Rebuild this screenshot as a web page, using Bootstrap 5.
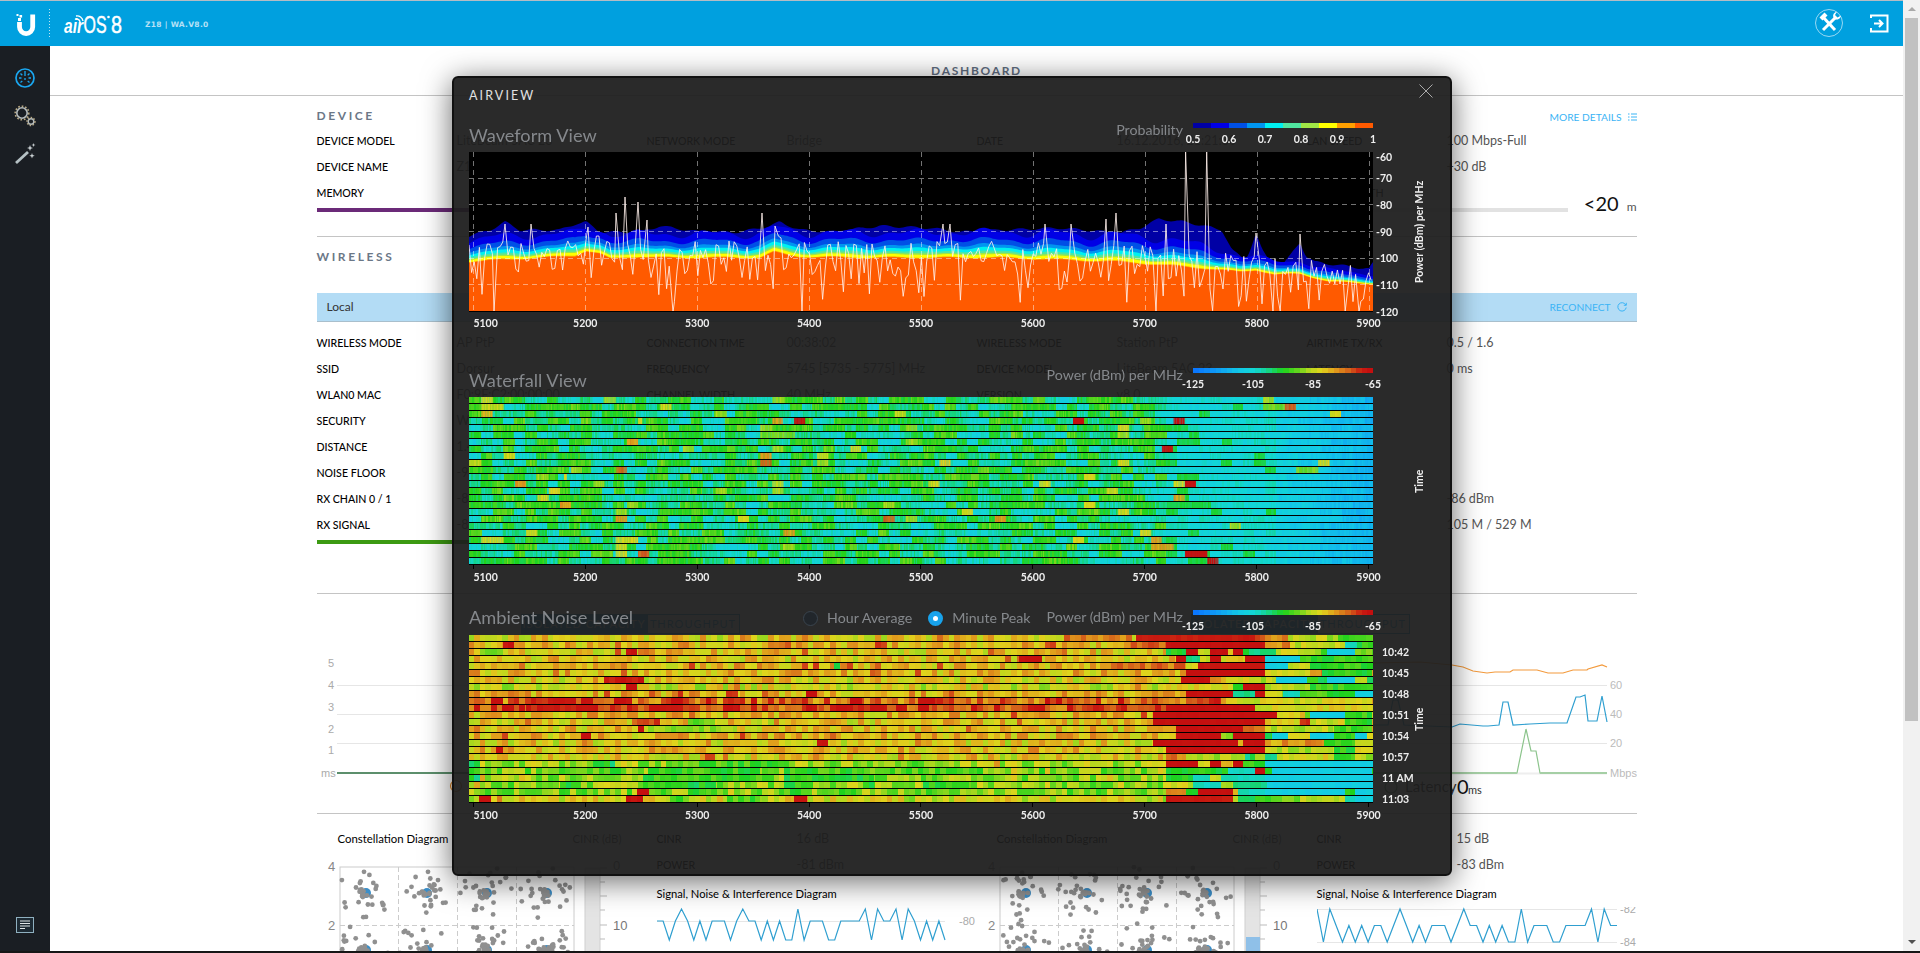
<!DOCTYPE html>
<html lang="en">
<head>
<meta charset="utf-8">
<title>airOS 8</title>
<link href="https://cdn.jsdelivr.net/npm/bootstrap@5.3.0/dist/css/bootstrap.min.css" rel="stylesheet">
<style>
html,body{height:953px;overflow:hidden;margin:0;background:#fff;font-family:"Lato",sans-serif;color:#555;font-size:12.5px}
.shell{height:953px;display:flex;flex-direction:column;position:relative;border-top:1px solid #b4bcc4}
.bluebar{height:45px;flex:none;background:#00a0df;padding:0!important;display:flex;align-items:stretch;margin-right:17px;flex-wrap:nowrap;justify-content:flex-start}
.ver{font:700 7.5px/1 "DejaVu Sans",sans-serif;letter-spacing:.3px;color:#b6e0f6;margin:20px 0 0 0;height:10px}
.topicons{margin-right:14px}
.midrow{flex:1;display:flex;min-height:0}
.footstrip{height:2px;flex:none;background:#161616}
.sideb{width:50px;flex:none;background:#1a1e23;display:flex;flex-direction:column;align-items:center;padding-top:21px}
.sideb .ic{display:block;margin-bottom:15px}
.mainp{flex:1;min-width:0;overflow:hidden;background:#fff}
.scrolly{width:17px;flex:none;background:#f1f1f1;display:flex;flex-direction:column;align-items:center;margin-top:-46px}
.thumby{width:13px;height:703px;background:#c1c1c1;margin-top:7px}
.spc{flex:1}
.arr-up,.arr-dn{width:0;height:0;border-left:4px solid transparent;border-right:4px solid transparent}
.arr-up{border-bottom:4px solid #a9a9a9;margin-top:7px}
.arr-dn{border-top:4px solid #505050;margin-bottom:7px}
.dtitle{height:50px;border-bottom:1px solid #c4c4c4;text-align:center;font:700 12px/50px "Lato",sans-serif;letter-spacing:1.7px;color:#5f6d80}
.wrapc{width:1320px;margin:0 auto}
.shead{font:700 12px/20px "Lato",sans-serif;letter-spacing:2.6px;color:#6b7787;padding-top:10px;display:flex;justify-content:space-between}
.lnk{font:400 10.2px/20px "Lato",sans-serif;letter-spacing:0;color:#3bb4f5;display:flex;align-items:center;gap:6px;text-decoration:none}
.shead .lnk{transform:translateY(1px)}
.kv{display:flex;line-height:26px;height:26px;white-space:nowrap}
.kv b{width:140px;flex:none;font-weight:500;font-size:10.6px;color:#000;text-transform:uppercase}
.kv span{font-size:12.5px;color:#555}
.meter{height:4px;background:#e2e2e2;margin-top:2px;display:flex}
.meter i{display:block;height:4px}
.rule{border-top:1px solid #c4c4c4}
.localbar{height:29px;background:#b3dcf5;border-bottom:1px solid #a9bfcc;display:flex;justify-content:space-between;align-items:center;padding:0 10px;margin-top:26px;color:#333;font-size:12px}
.charts{height:219px}
.chartcol{width:660px}
.modebtns{height:20px;margin-top:20px;display:block}
.modebtns .btn{font:400 11px/18px "Lato",sans-serif;padding:0;border-radius:0;border:1px solid #2a9fd6;letter-spacing:1px;height:20px;vertical-align:top}
.mb1{width:127px;background:#2aa7e0;color:#fff}
.mb2{width:93px;background:#fff;color:#2aa7e0}
.chartcol svg{display:block}
.tt{font-size:11.4px;line-height:26px;color:#000;white-space:nowrap}
.tt2{font-size:11.2px}
.constel{width:340px;flex:none}
.sigbox{width:320px;flex:none}
/* Overlay */
.airview{position:absolute;left:452px;top:75px;width:1000px;height:800px;background:rgba(30,30,30,.945);border:2px solid #111;border-radius:6px;box-shadow:0 5px 30px rgba(0,0,0,.6);padding:0 0 0 15px;display:block;color:#eee}
.avhead{height:42px;padding-top:10px;font:400 12.5px/16px "Lato",sans-serif;letter-spacing:2.1px;color:#e2e2e2;display:flex;justify-content:space-between}
.xclose{margin:-4px 17px 0 0;display:block}
.phead{display:flex;justify-content:flex-end;align-items:flex-start;position:relative}
.ph1{height:32px}.ph2{height:32px;margin-top:34px}.ph3{height:28px;margin-top:22px}
.ptitle{font:400 18.2px/24px "Lato",sans-serif;color:#85888c;margin-right:auto;white-space:nowrap}
.ph1 .ptitle{margin-top:3px}.ph2 .ptitle{margin-top:3px}.ph3 .ptitle{margin-top:-2px}
.legname{font:400 14.2px/20px "Lato",sans-serif;color:#85888c;margin-right:10px;white-space:nowrap}
.legend{width:180px;margin-right:77px;padding-top:3px}
.legend canvas{display:block}
.legticks{display:flex;justify-content:space-between;margin-top:3px}
.tk{width:0;display:flex;justify-content:center;font:700 10.5px/16px "Lato",sans-serif;color:#eee;white-space:nowrap}
.rad{display:flex;align-items:center;gap:9px;font:400 14.2px/20px "Lato",sans-serif;color:#85888c;margin-right:16px;white-space:nowrap}
.radgrp{display:flex;margin-right:16px;margin-top:1px}
.rdot{width:15px;height:15px;border-radius:50%;border:1px solid #3a444e;background:#21262b;flex:none}
.rdot.on{background:#fff;border:5px solid #18a3ec}
.plotrow{display:flex;align-items:flex-start;height:168px}
.pr1{height:160px}
.plotrow canvas{display:block;flex:none}
.yax{width:40px;flex:none;font:700 10.5px/16px "Lato",sans-serif;color:#eee;padding-left:3px;white-space:nowrap}
.ya1{margin-top:-3px}
.ya1 div{height:26.7px}.ya1 div:first-child{height:21.3px}
.ya3{margin-top:9px;padding-left:9px}
.ya3 div{height:21px}
.vlab{font:700 10.5px/14px "Lato",sans-serif;color:#eee;writing-mode:vertical-rl;transform:rotate(180deg);white-space:nowrap;margin-left:-1px;text-align:center}
.vl1{height:160px}.vl2{height:168px}.vl3{height:168px}
.xax{display:flex;justify-content:space-between;margin-left:4.4px;width:895.2px}
.xt{width:0;display:flex;flex-direction:column;align-items:center;font:700 10.5px/16px "Lato",sans-serif;color:#eee}
.xt:first-child{align-items:flex-start}
.xt::before{content:"";display:block;width:1px;height:4px;background:#000;flex:none}
.xa1{margin-top:3px}
.xa1 .xt::before{display:none}
</style>
</head>
<body>
<div class="shell">
  <nav class="navbar bluebar">
    <svg width="145" height="45" viewBox="0 0 145 45" aria-hidden="true">
      <path d="M19.5 21V26a6.6 6.6 0 0 0 13.2 0V13.5" fill="none" stroke="#fff" stroke-width="4.8"/>
      <rect x="16.5" y="13" width="2" height="2" fill="#fff"/><rect x="19.5" y="14" width="2.6" height="2.6" fill="#fff"/><rect x="18" y="17" width="3" height="3" fill="#fff"/>
      <path d="M49.5 8V38" stroke="#bfe6f7" stroke-dasharray="1 2"/>
      <text x="64" y="32" font-family="Liberation Sans,sans-serif" font-style="italic" font-weight="700" font-size="20" fill="#fff" textLength="19" lengthAdjust="spacingAndGlyphs">air</text>
      <text x="83.5" y="32" font-family="Liberation Sans,sans-serif" font-weight="400" font-size="24" fill="#fff" textLength="23" lengthAdjust="spacingAndGlyphs" stroke="#fff" stroke-width=".5">OS</text>
      <text x="111" y="32" font-family="Liberation Sans,sans-serif" font-weight="400" font-size="24" fill="#fff" textLength="11" lengthAdjust="spacingAndGlyphs" stroke="#fff" stroke-width=".5">8</text>
      <path d="M76 15a6 6 0 0 1 7 5M76 18a3.5 3.5 0 0 1 4 3" fill="none" stroke="#fff" stroke-width="1.4"/>
      <circle cx="108.500" cy="16" r="1.300" fill="#fff"/>
    </svg>
    <span class="ver">Z18 | WA.V8.0</span>
    <span class="spc"></span>
    <svg class="topicons" width="74" height="45" viewBox="0 0 74 45" aria-hidden="true">
      <circle cx="14" cy="22" r="13.500" fill="none" stroke="#bfe6f7" stroke-width=".8"/>
      <path d="M8 16L20 29" stroke="#fff" stroke-width="3"/>
      <path d="M4.500 16.500L9.500 11.500L12.500 14.500L7.500 19.500Z" fill="#fff"/>
      <path d="M21 16L8 29" stroke="#fff" stroke-width="3"/>
      <path d="M19 17.500a4.500 4.500 0 0 1 1-6l2-1-2 3.500 2.500 2.500 3.500-2a4.500 4.500 0 0 1-6.500 3.500Z" fill="#fff"/>
      <path d="M56 17V14.500H72.500V30.500H56V27" fill="none" stroke="#fff" stroke-width="2"/>
      <path d="M59 22.500H67M64 19l3.500 3.500-3.500 3.500" fill="none" stroke="#fff" stroke-width="2"/>
    </svg>
  </nav>
  <div class="midrow">
    <aside class="sideb">
      <svg class="ic" width="22" height="22" viewBox="0 0 22 22" aria-hidden="true">
        <circle cx="11" cy="11" r="9" fill="none" stroke="#1aa7f0" stroke-width="1.700"/>
        <path d="M11 4V9M5 11H7.500M17 11H14.500M6.500 6.500L8.300 8.300M15.500 6.500L13.700 8.300M6.500 15.500L8.300 14M15.500 15.500L13.700 14M11 11V13" stroke="#1aa7f0" stroke-width="1.300" fill="none"/>
      </svg>
      <svg class="ic" width="22" height="24" viewBox="0 0 22 24" aria-hidden="true">
        <circle cx="8" cy="9" r="5.200" fill="none" stroke="#b5bcbd" stroke-width="1.600"/>
        <circle cx="8" cy="9" r="6.800" fill="none" stroke="#b8a985" stroke-width="1.600" stroke-dasharray="1.700 1.800"/>
        <circle cx="17" cy="17.500" r="2.800" fill="none" stroke="#b5bcbd" stroke-width="1.400"/>
        <circle cx="17" cy="17.500" r="4" fill="none" stroke="#b8a985" stroke-width="1.400" stroke-dasharray="1.500 1.500"/>
      </svg>
      <svg class="ic" width="22" height="22" viewBox="0 0 22 22" aria-hidden="true">
        <path d="M2 20L14 9" stroke="#b5c1c4" stroke-width="2.800"/>
        <path d="M16 2l.8 2.200L19 5l-2.200.8L16 8l-.8-2.200L13 5l2.200-.8ZM19.500 0l.5 1.500 1.500.5-1.500.5-.5 1.500-.5-1.500L17.500 2l1.500-.5ZM18 10l.7 2 2 .7-2 .7-.7 2-.7-2-2-.7 2-.7Z" fill="#ccd2d4"/>
      </svg>
      <span class="spc"></span>
      <svg width="18" height="16" viewBox="0 0 18 16" style="margin-bottom:18px" aria-hidden="true">
        <rect x=".5" y=".5" width="17" height="15" fill="#1d2a33" stroke="#8fb0c0"/>
        <path d="M4 4H14M4 6.500H14M4 9H14M4 11.500H9" stroke="#e0e6e8" stroke-width="1"/>
      </svg>
    </aside>
    <main class="mainp">
      <div class="dtitle">DASHBOARD</div>
      <div class="wrapc">
        <div class="shead"><span>DEVICE</span><a class="lnk">MORE DETAILS
          <svg width="9" height="8" viewBox="0 0 9 8" aria-hidden="true"><path d="M0 1H1.500M3 1H9M0 4H1.500M3 4H9M0 7H1.500M3 7H9" stroke="#3bb4f5"/></svg></a></div>
        <div class="row g-0" style="margin-top:2px">
          <div class="col-3">
            <div class="kv"><b>Device Model</b><span>LiteBeam 5AC 23</span></div>
            <div class="kv"><b>Device Name</b><span>Z18</span></div>
            <div class="kv"><b>Memory</b><span></span></div>
            <div class="meter" style="width:310px"><i style="width:52%;background:#6b2a78"></i></div>
          </div>
          <div class="col-3">
            <div class="kv"><b>Network Mode</b><span>Bridge</span></div>
            <div class="kv"><b>Uptime</b><span>00:39:41</span></div>
            <div class="kv"><b>CPU</b><span></span></div>
            <div class="meter" style="width:310px"><i style="width:12%;background:#6b2a78"></i></div>
          </div>
          <div class="col-3">
            <div class="kv"><b>Date</b><span>16.12.2016, 21:21:30</span></div>
            <div class="kv"><b>LAN MAC</b><span>F0:9F:C2</span></div>
            <div class="kv"><b>Uplink</b><span></span></div>
            <div class="meter" style="width:310px"><i style="width:20%;background:#999"></i></div>
          </div>
          <div class="col-3">
            <div class="kv"><b>LAN Speed</b><span>100 Mbps-Full</span></div>
            <div class="kv"><b>Cable SNR</b><span>+30 dB</span></div>
            <div class="kv"><b>Cable Length</b><span></span></div>
            <div class="d-flex align-items-center" style="height:4px;margin-top:2px">
              <div class="meter" style="width:261px;margin-top:0"></div>
              <div class="ms-auto text-nowrap" style="margin-bottom:10px;color:#111;font-size:20px;line-height:24px">&lt;20<span style="font-size:12px;color:#555;margin-left:8px">m</span></div>
            </div>
          </div>
        </div>
        <div class="rule" style="margin-top:24px"></div>
        <div class="shead"><span>WIRELESS</span></div>
        <div class="localbar"><span>Local</span><a class="lnk">RECONNECT
          <svg width="10" height="10" viewBox="0 0 10 10" aria-hidden="true"><path d="M8.800 3A4.200 4.200 0 1 0 9.200 5.500M9.300.8V3.300H6.800" fill="none" stroke="#3bb4f5"/></svg></a></div>
        <div class="row g-0" style="margin-top:8px">
          <div class="col-3">
            <div class="kv"><b>Wireless Mode</b><span>AP PtP</span></div>
            <div class="kv"><b>SSID</b><span>Dorsur</span></div>
            <div class="kv"><b>WLAN0 MAC</b><span>F0:9F:C2:00:00:00</span></div>
            <div class="kv"><b>Security</b><span>WPA2-AES</span></div>
            <div class="kv"><b>Distance</b><span>1.4 km</span></div>
            <div class="kv"><b>Noise Floor</b><span>-96 dBm</span></div>
            <div class="kv"><b>RX Chain 0 / 1</b><span>-84 / -83 dBm</span></div>
            <div class="kv"><b>RX Signal</b><span>-82 dBm</span></div>
            <div class="meter" style="width:310px"><i style="width:70%;background:#3c9a12"></i></div>
          </div>
          <div class="col-3">
            <div class="kv"><b>Connection Time</b><span>00:38:02</span></div>
            <div class="kv"><b>Frequency</b><span>5745 [5735 - 5775] MHz</span></div>
            <div class="kv"><b>Channel Width</b><span>40 MHz</span></div>
            <div class="kv"><b>TX Rate</b><span></span></div>
          </div>
          <div class="col-3">
            <div class="kv"><b>Wireless Mode</b><span>Station PtP</span></div>
            <div class="kv"><b>Device Model</b><span>LiteBeam 5AC 23</span></div>
            <div class="kv"><b>Version</b><span>v8.0</span></div>
          </div>
          <div class="col-3">
            <div class="kv"><b>Airtime TX/RX</b><span>0.5 / 1.6</span></div>
            <div class="kv"><b>Latency</b><span>0 ms</span></div>
            <div class="kv"><b></b><span></span></div>
            <div class="kv"><b></b><span></span></div>
            <div class="kv"><b></b><span></span></div>
            <div class="kv"><b></b><span></span></div>
            <div class="kv"><b>Signal</b><span>-86 dBm</span></div>
            <div class="kv"><b>Capacity</b><span>105 M / 529 M</span></div>
          </div>
        </div>
        <div class="rule" style="margin-top:49px"></div>
        <div class="d-flex charts">
          <div class="chartcol">
            <div class="btn-group modebtns" style="margin-left:204px"><button class="btn mb1">ISOLATED CAPACITY</button><button class="btn mb2">THROUGHPUT</button></div>
            <svg width="660" height="179" viewBox="317 634 660 179" font-family="Liberation Sans,sans-serif" font-size="11" fill="#aaa" aria-hidden="true">
              <path d="M337 685.500H646M337 714.500H646M337 743.500H646" stroke="#e6e6e6"/>
              <text x="328" y="667">5</text><text x="328" y="689">4</text><text x="328" y="711">3</text><text x="328" y="733">2</text><text x="328" y="754">1</text><text x="321" y="777">ms</text>
              <path d="M337 773H646" stroke="#5c8f6c" stroke-width="2"/>
              <circle cx="456" cy="786" r="5.500" fill="none" stroke="#e08a2a" stroke-width="1.200"/>
            </svg>
          </div>
          <div class="chartcol">
            <div class="btn-group modebtns" style="margin-left:214px"><button class="btn mb1">ISOLATED CAPACITY</button><button class="btn mb2">THROUGHPUT</button></div>
            <svg width="660" height="179" viewBox="977 634 660 179" font-family="Liberation Sans,sans-serif" font-size="11" fill="#bbb" aria-hidden="true">
              <path d="M1060 685.500H1607M1060 714.500H1607M1060 743.500H1607" stroke="#e6e6e6"/>
              <path d="M1060 773.500H1607" stroke="#eee" stroke-width="2"/>
              <polyline fill="none" stroke="#f39a3c" stroke-width="1.200" points="1373,663 1420,662 1452,665 1463,667 1473,671 1487,673 1495,672 1510,672 1513,670 1537,670 1548,673 1563,673 1573,670 1587,670 1588,669 1602,665 1607,667"/>
              <polyline fill="none" stroke="#2f9fd0" stroke-width="1.200" points="1373,725 1388,725 1393,700 1398,700 1404,725 1452,727 1460,724 1483,726 1488,726 1499,725 1503,702 1508,702 1513,725 1530,724 1550,723 1567,723 1576,697 1580,697 1585,695 1588,721 1597,721 1602,696 1607,722"/>
              <polyline fill="none" stroke="#8cc48c" stroke-width="1.200" points="1060,773 1517,773 1526,729 1531,751 1536,751 1540,773 1607,773"/>
              <path d="M1060 773H1517M1540 773H1607" stroke="#a5cfa5" stroke-width="2"/>
              <text x="1610" y="689">60</text><text x="1610" y="718">40</text><text x="1610" y="747">20</text><text x="1610" y="777">Mbps</text>
              <circle cx="1391" cy="787" r="6" fill="none" stroke="#5c9a6c" stroke-width="1.200"/>
              <text x="1405" y="792" font-family="Lato,sans-serif" font-size="15" fill="#333">Latency</text>
              <text x="1457" y="794" font-family="Lato,sans-serif" font-size="20" fill="#111">0</text>
              <text x="1468" y="794" font-family="Lato,sans-serif" font-size="11" fill="#333">ms</text>
            </svg>
          </div>
        </div>
        <div class="rule"></div>
        <div class="d-flex" style="padding-top:12px">
          <div class="chartcol d-flex">
            <div class="constel">
              <div class="tt d-flex"><span style="margin-left:21px;width:235px">Constellation Diagram</span><span style="color:#555">CINR (dB)</span></div>
              <svg class="cn" data-blue="0" width="340" height="99" viewBox="0 0 340 99" font-family="Liberation Sans,sans-serif" font-size="13" fill="#888" aria-hidden="true"></svg>
            </div>
            <div class="sigbox">
              <div class="kv"><b>CINR</b><span>16 dB</span></div>
              <div class="kv"><b>Power</b><span>-81 dBm</span></div>
              <div class="tt tt2" style="margin-top:3px">Signal, Noise &amp; Interference Diagram</div>
              <svg class="sg" width="320" height="44" viewBox="0 0 320 44" font-family="Liberation Sans,sans-serif" font-size="11" fill="#aaa" aria-hidden="true"><text x="302" y="18">-80</text></svg>
            </div>
          </div>
          <div class="chartcol d-flex">
            <div class="constel">
              <div class="tt d-flex"><span style="margin-left:20px;width:236px">Constellation Diagram</span><span style="color:#555">CINR (dB)</span></div>
              <svg class="cn" data-blue="1" width="340" height="99" viewBox="0 0 340 99" font-family="Liberation Sans,sans-serif" font-size="13" fill="#888" aria-hidden="true"></svg>
            </div>
            <div class="sigbox">
              <div class="kv"><b>CINR</b><span>15 dB</span></div>
              <div class="kv"><b>Power</b><span>-83 dBm</span></div>
              <div class="tt tt2" style="margin-top:3px">Signal, Noise &amp; Interference Diagram</div>
              <svg class="sg" width="320" height="44" viewBox="0 0 320 44" font-family="Liberation Sans,sans-serif" font-size="11" fill="#aaa" aria-hidden="true"><text x="303" y="6">-82</text><text x="303" y="39">-84</text></svg>
            </div>
          </div>
        </div>
      </div>
    </main>
    <div class="scrolly"><span class="arr-up"></span><div class="thumby"></div><span class="spc"></span><span class="arr-dn"></span></div>
  </div>
  <div class="footstrip"></div>

  <section class="modal-content airview">
    <div class="avhead"><span>AIRVIEW</span>
      <svg class="xclose" width="14" height="14" viewBox="0 0 14 14" aria-hidden="true"><path d="M.5.5L13.500 13.500M13.500.5L.5 13.500" stroke="#aaa" stroke-width="1"/></svg></div>

    <div class="phead ph1"><span class="ptitle">Waveform View</span><span class="legname">Probability</span>
      <div class="legend"><canvas id="cbP" width="180" height="5"></canvas>
        <div class="legticks"><span class="tk">0.5</span><span class="tk">0.6</span><span class="tk">0.7</span><span class="tk">0.8</span><span class="tk">0.9</span><span class="tk">1</span></div></div></div>
    <div class="plotrow pr1"><canvas id="wave" width="904" height="160"></canvas>
      <div class="yax ya1"><div>-60</div><div>-70</div><div>-80</div><div>-90</div><div>-100</div><div>-110</div><div>-120</div></div>
      <div class="vlab vl1">Power (dBm) per MHz</div></div>
    <div class="xax xa1"><span class="xt">5100</span><span class="xt">5200</span><span class="xt">5300</span><span class="xt">5400</span><span class="xt">5500</span><span class="xt">5600</span><span class="xt">5700</span><span class="xt">5800</span><span class="xt">5900</span></div>

    <div class="phead ph2"><span class="ptitle">Waterfall View</span><span class="legname">Power (dBm) per MHz</span>
      <div class="legend"><canvas class="cbH" width="180" height="5"></canvas>
        <div class="legticks"><span class="tk">-125</span><span class="tk">-105</span><span class="tk">-85</span><span class="tk">-65</span></div></div></div>
    <div class="plotrow"><canvas id="fall" width="904" height="168"></canvas>
      <div class="yax"></div><div class="vlab vl2">Time</div></div>
    <div class="xax"><span class="xt">5100</span><span class="xt">5200</span><span class="xt">5300</span><span class="xt">5400</span><span class="xt">5500</span><span class="xt">5600</span><span class="xt">5700</span><span class="xt">5800</span><span class="xt">5900</span></div>

    <div class="phead ph3"><span class="ptitle">Ambient Noise Level</span>
      <div class="radgrp"><label class="rad"><span class="rdot"></span>Hour Average</label><label class="rad" style="margin-right:0"><span class="rdot on"></span>Minute Peak</label></div>
      <span class="legname">Power (dBm) per MHz</span>
      <div class="legend"><canvas class="cbH" width="180" height="5"></canvas>
        <div class="legticks"><span class="tk">-125</span><span class="tk">-105</span><span class="tk">-85</span><span class="tk">-65</span></div></div></div>
    <div class="plotrow"><canvas id="noise" width="904" height="168"></canvas>
      <div class="yax ya3"><div>10:42</div><div>10:45</div><div>10:48</div><div>10:51</div><div>10:54</div><div>10:57</div><div>11 AM</div><div>11:03</div></div>
      <div class="vlab vl3">Time</div></div>
    <div class="xax"><span class="xt">5100</span><span class="xt">5200</span><span class="xt">5300</span><span class="xt">5400</span><span class="xt">5500</span><span class="xt">5600</span><span class="xt">5700</span><span class="xt">5800</span><span class="xt">5900</span></div>
  </section>
</div>

<script src="https://cdn.jsdelivr.net/npm/bootstrap@5.3.0/dist/js/bootstrap.bundle.min.js"></script>
<script>
function prng(a){return function(){a|=0;a=a+0x6D2B79F5|0;var t=Math.imul(a^a>>>15,1|a);t=t+Math.imul(t^t>>>7,61|t)^t;return((t^t>>>14)>>>0)/4294967296}}
var stops=[[0,[10,120,255]],[.12,[15,156,245]],[.25,[18,200,230]],[.33,[18,214,214]],[.4,[20,212,154]],[.5,[29,210,29]],[.58,[94,213,29]],[.65,[180,216,30]],[.72,[224,212,28]],[.8,[224,154,28]],[.88,[212,96,26]],[.95,[200,27,16]],[1,[196,15,15]]];
function cmap(t){t=Math.max(0,Math.min(1,t));for(var i=1;i<stops.length;i++){if(t<=stops[i][0]){var a=stops[i-1],b=stops[i],k=(t-a[0])/(b[0]-a[0]);return 'rgb('+[0,1,2].map(function(j){return Math.round(a[1][j]+(b[1][j]-a[1][j])*k)}).join(',')+')'}}return 'rgb(196,15,15)'}
function ctx(el){return el.getContext('2d')}
/* colour bars */
(function(){
  var p=['#0000a5','#0000e6','#0050e6','#0096f0','#00f0f0','#50e6a0','#a0e646','#ffff00','#ffa000','#ff5a00'];
  var c=ctx(document.getElementById('cbP'));p.forEach(function(col,i){c.fillStyle=col;c.fillRect(i*18,0,18,5)});
  document.querySelectorAll('.cbH').forEach(function(el){var g=ctx(el);for(var i=0;i<32;i++){g.fillStyle=cmap(i/31);g.fillRect(Math.round(i*5.625),0,6,5)}});
})();
/* waveform */
(function(){
  var c=ctx(document.getElementById('wave')),X0=469,Y0=152,W=904,H=160,R=prng(77);
  function pw(a,x){for(var i=1;i<a.length;i++){if(x<=a[i][0]){var k=(x-a[i-1][0])/(a[i][0]-a[i-1][0]);return a[i-1][1]+(a[i][1]-a[i-1][1])*k}}return a[a.length-1][1]}
  var org=[[469,262],[500,260],[540,258],[575,256],[586,251],[600,254],[610,259],[640,257],[660,258],[760,258],[774,252],[790,256],[800,257],[860,258],[1000,258],[1120,262],[1187,267],[1240,272],[1256,270],[1275,275],[1300,274],[1330,282],[1373,284]];
  var nav=[[469,236],[490,230],[505,222],[520,230],[560,230],[575,224],[586,222],[600,232],[640,232],[660,226],[700,232],[740,232],[770,226],[780,222],[800,230],[830,232],[880,226],[930,228],[960,232],[1000,230],[1060,228],[1120,233],[1140,228],[1159,219],[1185,222],[1205,226],[1222,230],[1232,250],[1245,260],[1250,250],[1256,233],[1262,250],[1268,259],[1283,264],[1290,256],[1300,242],[1306,256],[1315,262],[1345,266],[1369,269],[1373,263]];
  var wid=[[469,23],[700,24],[1162,27],[1204,23],[1240,15],[1373,10]];
  c.fillStyle='#000';c.fillRect(0,0,W,H);
  var layers=[[1,'#0000e6'],[.7,'#0050e6'],[.5,'#0096f0'],[.38,'#00f0f0'],[.26,'#50e6a0'],[.18,'#a0e646'],[.13,'#ffff00'],[.03,'#ffa000'],[0,'#ff5a00']];
  function fillTo(fn,col){c.fillStyle=col;c.beginPath();c.moveTo(0,H);for(var x=0;x<=W;x+=2){c.lineTo(x,fn(x+X0)-Y0)}c.lineTo(W,H);c.closePath();c.fill()}
  fillTo(function(x){return pw(nav,x)+1.2*Math.sin(x/4.3)},'#0000a5');
  layers.forEach(function(l){fillTo(function(x){var w=pw(wid,x)*(1+.13*Math.sin(x/11)+.07*Math.sin(x/5));return pw(org,x)+.8*Math.sin(x/9)-w*l[0]},l[1])});
  /* grid */
  c.strokeStyle='rgba(255,255,255,.45)';c.lineWidth=1;c.setLineDash([5,4]);
  for(var i=0;i<9;i++){var gx=Math.round(4.4+i*111.9)+.5;c.beginPath();c.moveTo(gx,0);c.lineTo(gx,H);c.stroke()}
  for(var j=1;j<6;j++){var gy=Math.round(j*26.67)-.5;c.beginPath();c.moveTo(0,gy);c.lineTo(W,gy);c.stroke()}
  c.setLineDash([]);
  /* trace */
  var step=2.6;
  var pk={505:224,531:224,588:227,616:213,625:197,638:202,647:220,762:213,775:226,943:224,950:224,1045:224,1071:224,1106:219,1116:213,1166:224,1256:233,1300:234,1185.6:152,1206.7:152};
  var dips=[494,673,802,1273,1359,1156];
  var pts=[];for(var x=469;x<=1373;x+=step){var o=pw(org,x),r=R(),y;
    if(r<.6)y=o-18+R()*22;else if(r<.9)y=o+R()*22;else y=o+18+R()*26;pts.push([x,Math.min(y,311)])}
  Object.keys(pk).forEach(function(k){var x=+k,i=Math.round((x-469)/step);pts[i]=[x,pk[k]];});
  dips.forEach(function(x){var i=Math.round((x-469)/step);pts[i]=[x,312]});
  c.strokeStyle='rgba(255,240,235,.85)';c.lineWidth=1;c.beginPath();
  pts.forEach(function(p,i){var x=p[0]-X0,y=p[1]-Y0;i?c.lineTo(x,y):c.moveTo(x,y)});c.stroke();
  c.strokeStyle='#000';c.beginPath();c.moveTo(0,H-.5);c.lineTo(W,H-.5);c.stroke();
})();
/* waterfall */
(function(){
  var c=ctx(document.getElementById('fall')),R=prng(1234),W=904,cw=11.05;
  c.fillStyle='#000';c.fillRect(0,0,W,168);
  function a(z){return 440+z/2.903-469}function b(z){return 980+z/2.903-469}
  var Y=.7,G=.63,O=.8,D=.88,E=1;
  var H=[[0,a(120),a(153),Y],[0,a(475),a(510),G],[0,a(965),a(997),G],[0,b(822),b(853),G],
  [1,a(120),a(185),.68],[1,a(640),a(672),Y],[1,b(822),b(885),.6],[1,b(885),b(917),D],
  [2,a(120),a(153),.76],[2,a(800),a(833),G],[2,a(1320),a(1352),.68],[2,b(1016),b(1048),Y],
  [3,a(575),a(587),Y],[3,a(965),a(995),O],[3,a(1028),a(1060),E],[3,b(270),b(302),E],[3,b(465),b(497),G],[3,b(562),b(594),E],
  [4,a(930),a(965),G],[4,a(1352),a(1385),G],[4,b(400),b(433),Y],
  [5,a(930),a(1030),.6],[5,b(400),b(433),G],
  [6,a(543),a(575),O],[6,a(1352),a(1385),G],
  [7,a(705),a(737),G],[7,a(965),a(997),G],[7,a(1192),a(1222),Y],[7,b(528),b(560),E],
  [8,a(185),a(218),Y],[8,a(930),a(963),O],[8,a(1095),a(1127),.68],
  [9,a(85),a(120),Y],[9,a(930),a(963),D],[9,a(1095),a(1127),G],[9,a(1450),a(1482),.74],[9,b(400),b(433),Y],[9,b(982),b(1015),Y],
  [10,a(512),a(543),D],[10,a(380),a(412),G],[10,b(918),b(982),.6],
  [11,a(283),a(316),G],[11,a(360),a(368),Y],[11,b(302),b(335),Y],
  [12,a(218),a(250),O],[12,a(445),a(477),G],[12,a(965),a(997),.68],[12,a(1418),a(1450),Y],[12,b(172),b(205),Y],[12,b(562),b(594),Y],[12,b(595),b(627),E],
  [13,a(316),a(348),Y],[13,a(800),a(833),G],[13,a(965),a(997),G],[13,b(368),b(400),Y],
  [14,a(283),a(316),Y],[14,b(562),b(594),O],
  [15,a(348),a(380),O],[15,a(543),a(575),G],[15,a(1287),a(1320),G],[15,b(302),b(335),Y],
  [16,a(510),a(543),G],[16,a(1515),a(1547),Y],[16,b(400),b(433),Y],
  [17,a(510),a(543),O],[17,a(865),a(897),Y],[17,a(1287),a(1320),D],[17,a(1352),a(1385),G],[17,b(43),b(75),O],
  [18,b(725),b(757),G],
  [19,a(250),a(283),Y],[19,a(997),a(1030),O],[19,b(465),b(497),Y],
  [20,a(120),a(185),.7],[20,a(510),a(575),.7],[20,b(270),b(302),Y],[20,b(497),b(527),O],
  [21,a(510),a(543),Y],[21,a(995),a(1030),G],[21,b(497),b(562),O],
  [22,a(510),a(543),Y],[22,a(575),a(607),D],[22,b(595),b(660),E],
  [23,b(660),b(692),E]];
  for(var r=0;r<24;r++){
    var cells=[];for(var i=0;i<84;i++){var xc=i*cw,t,q=R();
      if(xc<690)t=q<.48?.47+R()*.1:(q<.8?.37+R()*.05:.31+R()*.04);
      else if(xc<800){t=q<(xc<740?.25:.1)?.47:.3+R()*.07}
      else t=.29-(xc-800)*.0011+R()*.05-.02;
      cells.push(t)}
    for(var x=0;x<W;){var w=1+Math.floor(R()*1.9),ci=Math.floor(x/cw),t=cells[ci]+(R()-.5)*(x<690?.1:.05);
      c.fillStyle=cmap(t);c.fillRect(x,r*7,w,6);x+=w}
  }
  H.forEach(function(h){var r=h[0],x=h[1];while(x<h[2]){var w=1+Math.floor(R()*2.5),t=h[3]+(h[3]>=1?0:(R()-.5)*.05);c.fillStyle=cmap(t);c.fillRect(x,r*7,Math.min(w,h[2]-x),6);x+=w}});
})();
/* ambient noise */
(function(){
  var c=ctx(document.getElementById('noise')),R=prng(4321),W=904,cw=5.65;
  c.fillStyle='#000';c.fillRect(0,0,W,168);
  function a(z){return 440+z/2.903-469}function b(z){return 980+z/2.903-469}
  var base=[.72,.75,.73,.73,.75,.75,.72,.69,.76,.85,.9,.75,.73,.74,.75,.72,.75,.72,.64,.59,.62,.62,.61,.69];
  for(var r=0;r<24;r++)for(var i=0;i<160;i++){
    var x=i*cw,t=base[r]+(R()-.5)*.2;if(R()<.08)t+=.08;
    c.fillStyle=cmap(t);c.fillRect(Math.floor(x),r*7,Math.ceil(cw),6)}
  function seg(r,x0,x1,t,n){n=n==null?.08:n;for(var x=x0;x<x1;x+=cw){c.fillStyle=cmap(t+(R()-.5)*n);c.fillRect(Math.floor(x),r*7,Math.ceil(Math.min(cw,x1-x)),6)}}
  var E=1,C=.28,T=.36,G=.52,Y=.68,O=.8;
  var L=[[1,a(183),a(215),E],[2,a(540),a(572),E],[2,a(117),a(182),.58],[4,a(1145),a(1160),.5],[6,a(477),a(590),.96],[7,a(540),a(572),E],[8,a(833),a(865),.9],[8,a(1065),a(1095),E],
  [9,a(150),a(182),E],[9,a(265),a(380),.95],[9,a(410),a(445),E],[9,a(508),a(558),E],[9,a(672),a(705),E],[9,a(1192),a(1225),E],[9,a(1390),a(1436),E],
  [10,a(182),a(215),E],[10,a(250),a(450),.96],[10,a(640),a(670),E],[10,a(835),a(865),E],[10,a(1065),a(1095),E],[10,a(1260),a(1290),E],[10,a(1325),a(1355),E],[10,a(1390),a(1420),E],
  [12,a(558),a(640),.9],[12,a(720),a(800),.52],[13,a(605),a(860),.62],[13,a(575),a(590),E],[14,a(412),a(440),E],[15,a(1095),a(1127),E],[16,a(165),a(182),E],[17,a(770),a(800),.93],
  [18,a(85),a(117),.4],[18,a(445),a(508),.45],[18,a(720),a(1030),.52],[18,a(1225),a(1440),.56],
  [19,a(380),a(540),.52],[19,a(605),a(930),.5],[19,a(1000),a(1225),.5],[19,a(1290),a(1560),.53],
  [20,a(85),a(117),.42],[20,a(590),a(930),.5],[20,a(1000),a(1260),.47],
  [21,a(350),a(410),.46],[21,a(590),a(800),.47],[21,a(1000),a(1080),.48],[21,a(1230),a(1260),.48],[21,a(1405),a(1540),.5],
  [22,a(573),a(605),E],[22,a(720),a(770),.52],[22,a(1000),a(1080),.5],[22,a(1095),a(1225),.52],
  [23,a(115),a(148),E],[23,a(540),a(588),E],[23,a(670),a(705),.52],[23,a(835),a(930),.52],[23,a(1030),a(1063),E]];
  L.forEach(function(s){var t=s[3];if(t<.62)seg(s[0],s[1],s[2],t+.03,.14);else seg(s[0],s[1],s[2],t)});
  var Rr=[
  [0,b(245),b(440),.84],[0,b(455),b(700),.95],[0,b(700),b(830),.93],[0,b(830),b(895),.82],[0,b(895),b(1040),.66],[0,b(1040),b(1140),.53],
  [1,b(440),b(540),.88],[1,b(540),b(830),E],[1,b(830),b(900),.82],[1,b(900),b(1060),.68],[1,b(1060),b(1095),.36],[1,b(1095),b(1140),.52],
  [2,b(540),b(600),.52],[2,b(600),b(635),E],[2,b(635),b(670),.7],[2,b(670),b(720),E],[2,b(720),b(735),.72],[2,b(735),b(765),E],[2,b(765),b(860),.45],[2,b(860),b(990),.68],[2,b(990),b(1010),.52],[2,b(1010),b(1090),C],[2,b(1090),b(1140),.62],
  [3,b(115),b(180),E],[3,b(570),b(600),E],[3,b(600),b(640),.42],[3,b(640),b(670),.7],[3,b(670),b(700),E],[3,b(700),b(770),.7],[3,b(770),b(830),E],[3,b(830),b(930),C],[3,b(930),b(1140),.53],
  [4,b(350),b(600),.85],[4,b(600),b(635),.7],[4,b(635),b(830),.97],[4,b(830),b(895),C],[4,b(895),b(960),.67],[4,b(960),b(1140),.52],
  [5,b(600),b(830),E],[5,b(830),b(960),.7],[5,b(960),b(995),.82],[5,b(995),b(1140),.52],
  [6,b(585),b(670),E],[6,b(670),b(700),.8],[6,b(700),b(800),.72],[6,b(800),b(860),.65],[6,b(860),b(950),C],[6,b(950),b(1010),.5],[6,b(1010),b(1090),C],[6,b(1090),b(1125),.7],[6,b(1125),b(1140),.5],
  [7,b(540),b(735),.7],[7,b(735),b(765),.45],[7,b(765),b(830),E],[7,b(830),b(960),.66],[7,b(960),b(1140),.53],
  [8,b(600),b(735),E],[8,b(735),b(800),.42],[8,b(800),b(830),E],[8,b(830),b(880),.66],[8,b(880),b(930),T],[8,b(930),b(1010),.55],[8,b(1010),b(1090),.52],[8,b(1090),b(1140),C],
  [9,b(600),b(700),.93],[9,b(700),b(716),.8],[9,b(716),b(1140),.69],
  [10,b(280),b(540),.92],[10,b(540),b(800),E],[10,b(800),b(1140),.7],
  [11,b(505),b(865),E],[11,b(865),b(945),.72],[11,b(945),b(960),.55],[11,b(960),b(1060),C],[11,b(1060),b(1140),.52],
  [12,b(505),b(830),E],[12,b(830),b(930),.72],[12,b(930),b(960),.9],[12,b(960),b(1060),.68],[12,b(1060),b(1140),.53],
  [13,b(570),b(765),E],[13,b(765),b(830),.84],[13,b(830),b(1030),.66],[13,b(1030),b(1140),.55],
  [14,b(570),b(700),E],[14,b(700),b(735),.62],[14,b(735),b(830),E],[14,b(830),b(850),.5],[14,b(850),b(895),C],[14,b(895),b(960),.72],[14,b(960),b(1030),C],[14,b(1030),b(1090),.52],[14,b(1090),b(1125),C],
  [15,b(505),b(750),E],[15,b(750),b(765),.72],[15,b(765),b(830),E],[15,b(830),b(1000),.8],[15,b(1000),b(1090),.53],[15,b(1090),b(1140),.66],
  [16,b(540),b(830),E],[16,b(830),b(1030),.65],[16,b(1030),b(1090),.52],[16,b(1090),b(1140),.68],
  [17,b(540),b(600),.85],[17,b(600),b(770),.66],[17,b(770),b(800),.45],[17,b(800),b(830),.6],[17,b(830),b(865),.4],[17,b(865),b(1030),.7],[17,b(1030),b(1090),.52],[17,b(1090),b(1140),.66],
  [18,b(540),b(635),E],[18,b(635),b(670),.72],[18,b(670),b(700),E],[18,b(700),b(735),.75],[18,b(735),b(765),E],[18,b(765),b(830),.55],[18,b(830),b(1140),C],
  [19,b(540),b(720),.5],[19,b(720),b(800),T],[19,b(800),b(830),E],[19,b(830),b(850),.5],[19,b(850),b(1140),C],
  [20,b(540),b(620),.52],[20,b(620),b(670),T],[20,b(670),b(700),.7],[20,b(700),b(830),T],[20,b(830),b(1140),C],
  [21,b(540),b(620),.68],[21,b(620),b(700),T],[21,b(700),b(735),.65],[21,b(735),b(835),.42],[21,b(835),b(1140),C],
  [22,b(540),b(600),.85],[22,b(600),b(635),.45],[22,b(635),b(735),E],[22,b(735),b(750),.72],[22,b(750),b(830),T],[22,b(830),b(1060),C],[22,b(1060),b(1090),.52],[22,b(1090),b(1140),C],
  [23,b(540),b(735),.96],[23,b(735),b(750),.72],[23,b(750),b(830),.5],[23,b(830),b(930),.58],[23,b(930),b(1060),.68],[23,b(1060),b(1090),T],[23,b(1090),b(1140),C]];
  Rr.forEach(function(s){var t=s[3],n=t>=.95?.03:(t<.45?.04:.12);seg(s[0],s[1],s[2],t,n)});
  c.fillStyle='#000';c.fillRect(0,167,W,1);
})();
/* constellation and signal svgs */
(function(){
  var NS='http://www.w3.org/2000/svg';
  function el(p,n,at,txt){var e=document.createElementNS(NS,n);for(var k in at)e.setAttribute(k,at[k]);if(txt)e.textContent=txt;p.appendChild(e);return e}
  document.querySelectorAll('.cn').forEach(function(s,si){
    var R=prng(si?99:17),blue=s.dataset.blue==='1';
    el(s,'rect',{x:23,y:15,width:234,height:90,fill:'#fff',stroke:'#ccc'});
    [81.5,140.5,199.5].forEach(function(x){el(s,'path',{d:'M'+x+' 15V99',stroke:'#ccc','stroke-dasharray':'5 3'})});
    el(s,'path',{d:'M23 73.500H257',stroke:'#ccc','stroke-dasharray':'5 3'});
    el(s,'text',{x:11,y:19},'4');el(s,'text',{x:11,y:78},'2');
    [49,110,170,230].forEach(function(cx){[41,98].forEach(function(cy){
      el(s,'circle',{cx:cx,cy:cy,r:5,fill:'#3b8ec8'});
      for(var i=0;i<34;i++){var a=R()*6.283,d=i<12?R()*6:8+R()*20;
        var x=cx+Math.cos(a)*d-3,y=cy+Math.sin(a)*d;
        if(y>15&&x>24)el(s,'circle',{cx:x.toFixed(1),cy:y.toFixed(1),r:2.4,fill:'#909090'})}
    })});
    el(s,'rect',{x:268,y:16,width:15,height:90,fill:'#e4e4e4',stroke:'#d0d0d0'});
    if(blue)el(s,'rect',{x:269,y:85,width:14,height:14,fill:'#8fc0e8'});
    el(s,'path',{d:'M283 16H290M283 30H288M283 44H290M283 58H288M283 73H290M283 87H288',stroke:'#bbb'});
    el(s,'text',{x:296,y:18,fill:'#777'},'0');el(s,'text',{x:296,y:78,fill:'#777'},'10');
  });
  var zig=[0,2,0,1,2,1,2,1,2,1,1,2,1,0,1,2,1,2,1,1,1,2,1,0,1,1,2,1,2,1,2,2,0,2,1,1,1,2,2,1,1,1,1,0,2,0,1,1];
  document.querySelectorAll('.sg').forEach(function(s,si){
    el(s,'path',{d:si?'M0 2.500H300M0 35.500H300':'M0 14.500H288',stroke:'#e6e6e6'});
    var pts=[],n=zig.length,w=si?300:288,yy=si?[2,18.5,35]:[2,14,33];
    zig.forEach(function(l,i){var v=si?l:zig[(i+9)%n];pts.push((i*w/(n-1)).toFixed(1)+','+yy[v])});
    el(s,'polyline',{points:pts.join(' '),fill:'none',stroke:'#2f9fd0','stroke-width':'1.2'});
  });
})();
</script>
</body>
</html>
